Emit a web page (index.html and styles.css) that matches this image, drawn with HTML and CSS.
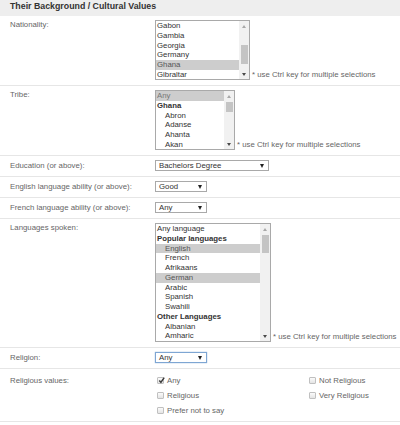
FILE: index.html
```html
<!DOCTYPE html>
<html>
<head>
<meta charset="utf-8">
<link rel="stylesheet" href="styles.css">
</head>
<body>
<div class="section">
  <div class="section-title">Their Background / Cultural Values</div>

  <div class="row">
    <div class="label">Nationality:</div>
    <div class="field">
      <div class="listbox lb-nat">
        <div class="options">
          <div class="opt">Gabon</div>
          <div class="opt">Gambia</div>
          <div class="opt">Georgia</div>
          <div class="opt">Germany</div>
          <div class="opt sel">Ghana</div>
          <div class="opt">Gibraltar</div>
        </div>
        <div class="scrollbar">
          <div class="sb-btn up"></div>
          <div class="sb-track"><div class="sb-thumb"></div></div>
          <div class="sb-btn down"></div>
        </div>
      </div>
      <span class="hint">* use Ctrl key for multiple selections</span>
    </div>
  </div>

  <div class="row">
    <div class="label">Tribe:</div>
    <div class="field">
      <div class="listbox lb-tribe">
        <div class="options">
          <div class="opt sel faint">Any</div>
          <div class="opt group">Ghana</div>
          <div class="opt indent">Abron</div>
          <div class="opt indent">Adanse</div>
          <div class="opt indent">Ahanta</div>
          <div class="opt indent">Akan</div>
        </div>
        <div class="scrollbar">
          <div class="sb-btn up"></div>
          <div class="sb-track"><div class="sb-thumb"></div></div>
          <div class="sb-btn down"></div>
        </div>
      </div>
      <span class="hint">* use Ctrl key for multiple selections</span>
    </div>
  </div>

  <div class="row single">
    <div class="label">Education (or above):</div>
    <div class="field">
      <div class="select sel-wide"><span>Bachelors Degree</span><i class="caret"></i></div>
    </div>
  </div>

  <div class="row single">
    <div class="label">English language ability (or above):</div>
    <div class="field">
      <div class="select"><span>Good</span><i class="caret"></i></div>
    </div>
  </div>

  <div class="row single">
    <div class="label">French language ability (or above):</div>
    <div class="field">
      <div class="select"><span>Any</span><i class="caret"></i></div>
    </div>
  </div>

  <div class="row">
    <div class="label">Languages spoken:</div>
    <div class="field">
      <div class="listbox lb-lang">
        <div class="options">
          <div class="opt">Any language</div>
          <div class="opt group">Popular languages</div>
          <div class="opt indent sel">English</div>
          <div class="opt indent">French</div>
          <div class="opt indent">Afrikaans</div>
          <div class="opt indent sel">German</div>
          <div class="opt indent">Arabic</div>
          <div class="opt indent">Spanish</div>
          <div class="opt indent">Swahili</div>
          <div class="opt group">Other Languages</div>
          <div class="opt indent">Albanian</div>
          <div class="opt indent">Amharic</div>
        </div>
        <div class="scrollbar">
          <div class="sb-btn up"></div>
          <div class="sb-track"><div class="sb-thumb"></div></div>
          <div class="sb-btn down"></div>
        </div>
      </div>
      <span class="hint">* use Ctrl key for multiple selections</span>
    </div>
  </div>

  <div class="row single">
    <div class="label">Religion:</div>
    <div class="field">
      <div class="select focused"><span>Any</span><i class="caret"></i></div>
    </div>
  </div>

  <div class="row values">
    <div class="label">Religious values:</div>
    <div class="checks">
      <label class="check"><span class="box checked"><svg viewBox="0 0 7 7" width="7" height="7"><path d="M1.3 3.6 L2.9 5.4 L6.2 0.6" fill="none" stroke="#3a3a3a" stroke-width="1.5"/></svg></span>Any</label>
      <label class="check"><span class="box"></span>Not Religious</label>
      <label class="check"><span class="box"></span>Religious</label>
      <label class="check"><span class="box"></span>Very Religious</label>
      <label class="check"><span class="box"></span>Prefer not to say</label>
    </div>
  </div>
</div>
</body>
</html>
```

FILE: styles.css
```css
html, body {
  margin: 0;
  padding: 0;
  background: #ffffff;
}

body {
  width: 400px;
  font-family: "Liberation Sans", Arial, sans-serif;
  font-size: 7.8px;
  color: #666666;
}

.section-title {
  height: 16px;
  line-height: 12px;
  background: #eeeeee;
  color: #333333;
  font-weight: bold;
  font-size: 8.8px;
  padding-left: 10px;
  box-sizing: border-box;
}

.row {
  display: flex;
  padding: 4px 0 5px;
  border-bottom: 1px solid #e6e6e6;
}

.label {
  flex: none;
  width: 145px;
  padding-left: 10px;
  line-height: 10px;
  white-space: nowrap;
}

.row.single .label {
  line-height: 11px;
}

.row.values {
  padding-bottom: 3px;
}

.row.values .label {
  line-height: 15px;
}

.field {
  display: flex;
  align-items: flex-end;
}

.hint {
  margin-left: 2px;
  line-height: 10px;
  white-space: nowrap;
  color: #666666;
}

/* list boxes */
.listbox {
  display: flex;
  box-sizing: border-box;
  border: 1px solid #a9a9a9;
  background: #ffffff;
}

.lb-nat { width: 95px; height: 60px; }
.lb-tribe { width: 80px; height: 60px; }
.lb-lang { width: 116px; height: 119px; }

.options {
  flex: 1;
  overflow: hidden;
  color: #333333;
  line-height: 9.75px;
}

.opt {
  padding-left: 1px;
  white-space: nowrap;
}

.opt.indent { padding-left: 9px; }
.opt.group { font-weight: bold; }
.opt.sel { background: #cdcdcd; color: #555555; }
.opt.faint { color: #777777; }

.scrollbar {
  flex: none;
  width: 10px;
  background: #f1f1f1;
  display: flex;
  flex-direction: column;
}

.sb-btn {
  flex: none;
  height: 10px;
  display: flex;
  align-items: center;
  justify-content: center;
}

.sb-btn::before {
  content: "";
  width: 0;
  height: 0;
  border-left: 2.5px solid transparent;
  border-right: 2.5px solid transparent;
}

.sb-btn.up::before { border-bottom: 3px solid #a8a8a8; }
.sb-btn.down::before { border-top: 3px solid #4a4a4a; }

.sb-track {
  flex: 1;
  display: flex;
  justify-content: center;
  align-items: flex-start;
}

.sb-thumb {
  width: 7px;
  background: #c4c4c4;
}

.lb-nat .sb-thumb { margin-top: 14px; height: 19px; }
.lb-tribe .sb-thumb { margin-top: 1px; height: 10px; }
.lb-lang .sb-thumb { margin-top: 1px; height: 18px; }

/* drop-down selects */
.select {
  box-sizing: border-box;
  width: 52px;
  height: 11px;
  border: 1px solid #a9a9a9;
  background: #ffffff;
  color: #333333;
  display: flex;
  align-items: center;
  justify-content: space-between;
  padding: 0 4px 0 3px;
  line-height: 9px;
}

.select.sel-wide { width: 114px; }

.select.focused {
  border-color: #7ea6d3;
  box-shadow: 0 0 1px #7ea6d3;
}

.caret {
  width: 0;
  height: 0;
  border-left: 2.5px solid transparent;
  border-right: 2.5px solid transparent;
  border-top: 4px solid #222222;
}

/* checkboxes */
.checks {
  display: grid;
  grid-template-columns: 152px auto;
  line-height: 15px;
}

.check {
  display: flex;
  align-items: center;
  gap: 3px;
  padding-left: 2px;
  white-space: nowrap;
  color: #666666;
}

.box {
  flex: none;
  box-sizing: border-box;
  width: 7px;
  height: 7px;
  border: 1px solid #c0c0c0;
  border-radius: 1px;
  background: linear-gradient(#fbfbfb, #e4e4e4);
  position: relative;
}

.box svg {
  position: absolute;
  left: -0.5px;
  top: -1.5px;
  overflow: visible;
}
```
